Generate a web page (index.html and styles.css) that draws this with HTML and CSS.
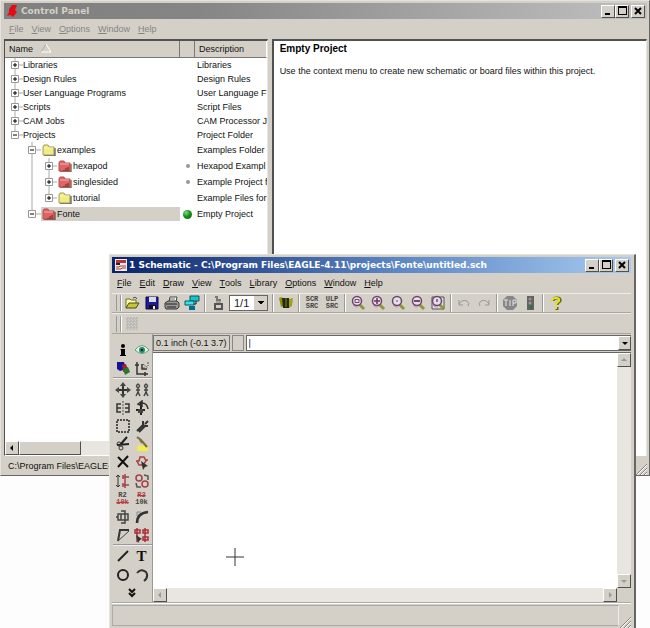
FILE: index.html
```html
<!DOCTYPE html>
<html lang="en">
<head>
<meta charset="utf-8">
<title>Control Panel</title>
<link rel="stylesheet" href="styles.css">
</head>
<body>
<svg class="defs" aria-hidden="true">
  <symbol id="min" viewBox="0 0 12 12"><path d="M3 8h5v2H3z"/></symbol>
  <symbol id="max" viewBox="0 0 12 12"><path d="M2 1h9v9H2zM3 3v6h7V3z" fill-rule="evenodd"/></symbol>
  <symbol id="close" viewBox="0 0 12 12"><path d="M3 3l6 6M9 3L3 9" stroke="#000" stroke-width="2"/></symbol>
  <symbol id="folder" viewBox="0 0 14 12"><path d="M1 3l1-2h4l1 2h5v8H1z" fill="currentColor" stroke="#a09a60"/><path d="M2 4h9" stroke="#fff" opacity=".6"/><path d="M13 4v8H2" fill="none" stroke="#333"/></symbol>
  <symbol id="project" viewBox="0 0 14 12"><path d="M1 3l1-2h4l1 2h5v8H1z" fill="#e06464" stroke="#b45050"/><path d="M2 4h9" stroke="#f8b0b0"/><path d="M13 4v8H2M8 8v3M10 7v4M6 10v1" fill="none" stroke="#622"/></symbol>
  <symbol id="lens" viewBox="0 0 16 16"><path d="M10 10l4 4" stroke="#8f9638" stroke-width="3"/><circle cx="7" cy="6" r="4.5" fill="#e8dce8" stroke="#684868" stroke-width="1.5"/><path d="M3 10l2 2h3" fill="none" stroke="#d48bc0"/></symbol>
  <symbol id="grip" viewBox="0 0 12 12"><path d="M1 12L12 1M5 12l7-7M9 12l3-3" stroke="#87847d"/><path d="M2 12L12 2M6 12l6-6M10 12l2-2" stroke="#fff"/></symbol>
  <symbol id="left" viewBox="0 0 12 12"><path d="M7 3v6L4 6z"/></symbol>
  <symbol id="right" viewBox="0 0 12 12"><path d="M5 3v6l3-3z"/></symbol>
  <symbol id="up" viewBox="0 0 12 12"><path d="M3 7h6L6 4z"/></symbol>
  <symbol id="down" viewBox="0 0 12 12"><path d="M3 5h6L6 8z"/></symbol>
  <symbol id="root-plus" viewBox="0 0 18 14"><path d="M10 0v14M10 7h8" stroke="#aaa"/><path d="M6.500 3.500h7v7h-7z" fill="#fff" stroke="#999"/><path d="M8 7h4M10 5v4" stroke="#000"/></symbol>
  <symbol id="root-minus" viewBox="0 0 18 14"><path d="M10 0v7h8" fill="none" stroke="#aaa"/><path d="M6.500 3.500h7v7h-7z" fill="#fff" stroke="#999"/><path d="M8 7h4" stroke="#000"/></symbol>
</svg>

<main class="desktop">
<section class="window control" aria-label="Control Panel">
  <header class="titlebar inactive">
    <svg class="app" viewBox="0 0 12 12"><path d="M5 0h5L8 5l2 2-4 5-3-2-3 1 2-4V4z" fill="#e80c12"/></svg>
    <h1>Control Panel</h1>
    <button aria-label="Minimize"><svg><use href="#min"/></svg></button>
    <button aria-label="Maximize"><svg><use href="#max"/></svg></button>
    <button class="close" aria-label="Close"><svg><use href="#close"/></svg></button>
  </header>
  <nav class="menu dim">
    <button><u>F</u>ile</button><button><u>V</u>iew</button><button><u>O</u>ptions</button><button><u>W</u>indow</button><button><u>H</u>elp</button>
  </nav>
  <div class="panes">
    <div class="tree">
      <table>
        <colgroup><col class="c-name"><col class="c-mark"><col></colgroup>
        <thead><tr><th>Name <svg class="sort" viewBox="0 0 12 10"><path d="M1 9L6 1" stroke="#aaa"/><path d="M6 1l5 8H1" fill="none" stroke="#fff"/></svg></th><th></th><th>Description</th></tr></thead>
        <tbody>
          <tr><td><div class="node"><svg class="branch"><use href="#root-plus"/></svg>Libraries</div></td><td></td><td>Libraries</td></tr>
          <tr><td><div class="node"><svg class="branch"><use href="#root-plus"/></svg>Design Rules</div></td><td></td><td>Design Rules</td></tr>
          <tr><td><div class="node"><svg class="branch"><use href="#root-plus"/></svg>User Language Programs</div></td><td></td><td>User Language F</td></tr>
          <tr><td><div class="node"><svg class="branch"><use href="#root-plus"/></svg>Scripts</div></td><td></td><td>Script Files</td></tr>
          <tr><td><div class="node"><svg class="branch"><use href="#root-plus"/></svg>CAM Jobs</div></td><td></td><td>CAM Processor J</td></tr>
          <tr><td><div class="node"><svg class="branch"><use href="#root-minus"/></svg>Projects</div></td><td></td><td>Project Folder</td></tr>
          <tr class="tall"><td><div class="node"><svg class="b2" viewBox="0 0 36 16"><path d="M27 0v16M27 8h9" stroke="#aaa"/><path d="M23.500 4.500h7v7h-7z" fill="#fff" stroke="#999"/><path d="M25 8h4" stroke="#000"/></svg><span class="label"><svg class="folder"><use href="#folder"/></svg>examples</span></div></td><td></td><td>Examples Folder</td></tr>
          <tr class="tall"><td><div class="node"><svg class="b3" viewBox="0 0 52 16"><path d="M27 0v16M44 0v16M44 8h8" stroke="#aaa"/><path d="M40.500 4.500h7v7h-7z" fill="#fff" stroke="#999"/><path d="M42 8h4M44 6v4" stroke="#000"/></svg><span class="label"><svg class="folder"><use href="#project"/></svg>hexapod</span></div></td><td><i class="dot"></i></td><td>Hexapod Exampl</td></tr>
          <tr class="tall"><td><div class="node"><svg class="b3" viewBox="0 0 52 16"><path d="M27 0v16M44 0v16M44 8h8" stroke="#aaa"/><path d="M40.500 4.500h7v7h-7z" fill="#fff" stroke="#999"/><path d="M42 8h4M44 6v4" stroke="#000"/></svg><span class="label"><svg class="folder"><use href="#project"/></svg>singlesided</span></div></td><td><i class="dot"></i></td><td>Example Project f</td></tr>
          <tr class="tall"><td><div class="node"><svg class="b3" viewBox="0 0 52 16"><path d="M27 0v16M44 0v8h8" fill="none" stroke="#aaa"/><path d="M40.500 4.500h7v7h-7z" fill="#fff" stroke="#999"/><path d="M42 8h4M44 6v4" stroke="#000"/></svg><span class="label"><svg class="folder"><use href="#folder"/></svg>tutorial</span></div></td><td></td><td>Example Files for</td></tr>
          <tr class="tall"><td><div class="node"><svg class="b2" viewBox="0 0 36 16"><path d="M27 0v8h9" fill="none" stroke="#aaa"/><path d="M23.500 4.500h7v7h-7z" fill="#fff" stroke="#999"/><path d="M25 8h4" stroke="#000"/></svg><span class="label selected"><svg class="folder"><use href="#project"/></svg>Fonte</span></div></td><td><i class="dot active"></i></td><td>Empty Project</td></tr>
        </tbody>
      </table>
      <div class="hscroll"><button aria-label="Scroll left"><svg><use href="#left"/></svg></button><span class="thumb"></span></div>
    </div>
    <article class="details">
      <h2>Empty Project</h2>
      <p>Use the context menu to create new schematic or board files within this project.</p>
    </article>
  </div>
  <footer class="status"><span>C:\Program Files\EAGLE-</span><svg class="grip"><use href="#grip"/></svg></footer>
</section>

<section class="window schematic" aria-label="Schematic">
  <header class="titlebar">
    <svg class="app" viewBox="0 0 12 12"><path d="M0 0h12v12H0z" fill="#eee"/><path d="M1 1h10v3H1z" fill="#b33"/><path d="M1 4h4v2H1z" fill="#222"/><path d="M1 8h3l1-1h6M1 10h5l1-1h4" fill="none" stroke="#a33"/></svg>
    <h1>1 Schematic - C:\Program Files\EAGLE-4.11\projects\Fonte\untitled.sch</h1>
    <button aria-label="Minimize"><svg><use href="#min"/></svg></button>
    <button aria-label="Maximize"><svg><use href="#max"/></svg></button>
    <button class="close" aria-label="Close"><svg><use href="#close"/></svg></button>
  </header>
  <nav class="menu">
    <button><u>F</u>ile</button><button><u>E</u>dit</button><button><u>D</u>raw</button><button><u>V</u>iew</button><button><u>T</u>ools</button><button><u>L</u>ibrary</button><button><u>O</u>ptions</button><button><u>W</u>indow</button><button><u>H</u>elp</button>
  </nav>
  <div class="toolbar">
    <i class="handle"></i>
    <button aria-label="Open"><svg viewBox="0 0 16 16"><path d="M2 13V4h4l1 1h5v3" fill="#ffffb0" stroke="#6b6b20"/><path d="M2 13l3-5h10l-3 5z" fill="#c8c43c" stroke="#4c4a10"/><path d="M9 3q3-2 4 1" fill="none" stroke="#444"/></svg></button>
    <button aria-label="Save"><svg viewBox="0 0 16 16"><path d="M2 2h12v12H2z" fill="#1c1c9c" stroke="#080840"/><path d="M5 2h7v5H5z" fill="#d8dce8"/><path d="M5 10h7v4H5z" fill="#111"/><path d="M9 11h2v3H9z" fill="#eee"/></svg></button>
    <button aria-label="Print"><svg viewBox="0 0 16 16"><path d="M5 7l1-5h7l-1 5" fill="#fff" stroke="#444"/><path d="M1 8l3-2h9l2 2v4l-2 2H2l-1-2z" fill="#999" stroke="#333"/><path d="M2 9h11M3 12h9" stroke="#222"/><path d="M6 4h5" stroke="#666"/></svg></button>
    <button aria-label="CAM processor"><svg viewBox="0 0 16 16"><path d="M6 1h9v5H6z" fill="#18c4cc" stroke="#075860"/><path d="M1 6h9v4H1z" fill="#35e4ec" stroke="#075860"/><path d="M5 11h6v4H5z" fill="#086894"/><path d="M12 6v3h-2" fill="none" stroke="#111"/></svg></button>
    <i class="sep"></i>
    <button aria-label="Board"><svg viewBox="0 0 16 16"><path d="M5 2h2v3h4" fill="none" stroke="#777" stroke-width="2"/><path d="M5 9h7v5H5z" fill="none" stroke="#555" stroke-width="2"/><path d="M6 7h5" stroke="#777"/></svg></button>
    <select class="sheet" aria-label="Sheet"><option>1/1</option></select>
    <i class="sep"></i>
    <button aria-label="Use library"><svg viewBox="0 0 16 16"><path d="M1 3l3-1 2 9-3 1z" fill="#8c8e10"/><path d="M4 3h4v10H5zM8 3h3v10H8z" fill="#222b10"/><path d="M11 4l4-1-1 8-3 2z" fill="#a5a018"/><path d="M8 3v9" stroke="#8a8620"/></svg></button>
    <i class="sep"></i>
    <button aria-label="Run script" class="lettered">SCR<br>SRC</button>
    <button aria-label="Run ULP" class="lettered">ULP<br>SRC</button>
    <i class="sep"></i>
    <button aria-label="Zoom to fit"><svg viewBox="0 0 16 16"><use href="#lens"/><path d="M5 4.500h4v3H5z" fill="none" stroke="#747"/></svg></button>
    <button aria-label="Zoom in"><svg viewBox="0 0 16 16"><use href="#lens"/><path d="M4 6h6M7 3v6" stroke="#712f66" stroke-width="1.500"/></svg></button>
    <button aria-label="Zoom out"><svg viewBox="0 0 16 16"><use href="#lens"/><path d="M6 6h2" stroke="#747"/></svg></button>
    <button aria-label="Redraw"><svg viewBox="0 0 16 16"><use href="#lens"/><path d="M4 6h6" stroke="#747" stroke-width="2"/></svg></button>
    <button aria-label="Zoom select"><svg viewBox="0 0 16 16"><path d="M2 2h12v12H2z" fill="#ddd" stroke="#555"/><use href="#lens"/><path d="M6 4h2v3H6z" fill="#96b"/></svg></button>
    <i class="sep"></i>
    <button aria-label="Undo"><svg viewBox="0 0 16 16"><path d="M3 5v5h4M3 9q3-5 8-3 3 2 1 5" fill="none" stroke="#999"/></svg></button>
    <button aria-label="Redo"><svg viewBox="0 0 16 16"><path d="M13 5v5H9M13 9q-3-5-8-3-3 2-1 5" fill="none" stroke="#999"/></svg></button>
    <i class="sep"></i>
    <button aria-label="Stop"><svg viewBox="0 0 16 16"><path d="M5 1h6l4 4v6l-4 4H5l-4-4V5z" fill="#85858a"/><path d="M4 5v6M2 5h4M8 5v6M11 5v6M11 5h3v3h-3" fill="none" stroke="#e6e6e6"/></svg></button>
    <button aria-label="Go"><svg viewBox="0 0 16 16"><path d="M5 1h7v14H5z" fill="#626462"/><circle cx="8" cy="4" r="1.500" fill="#b08888"/><circle cx="8" cy="8" r="1.500" fill="#999"/><circle cx="9" cy="12" r="2" fill="#356e4c"/></svg></button>
    <i class="sep"></i>
    <button aria-label="Help"><svg viewBox="0 0 16 16"><path d="M5 6q0-3 4-3 4 0 3 3-3 2-3 4M9 12v3" fill="none" stroke="#66661a" stroke-width="3"/><path d="M4 6q0-3 4-3 4 0 3 3-3 2-3 4M8 12v2" fill="none" stroke="#e8e420" stroke-width="2"/></svg></button>
  </div>
  <div class="toolbar params">
    <i class="handle"></i>
    <button aria-label="Grid"><svg viewBox="0 0 16 16"><path d="M2 3h12M2 6h12M2 9h12M2 12h12M4 1v13M7 1v13M10 1v13M13 1v13" stroke="#aaa" stroke-dasharray="2 1"/></svg></button>
  </div>
  <div class="editor">
    <aside class="palette">
      <div class="group g2">
        <button aria-label="Info"><svg viewBox="0 0 16 16"><circle cx="8" cy="4" r="2"/><path d="M6 7h4v6h1v1H5v-1h1V8H5z"/></svg></button>
        <button aria-label="Show"><svg viewBox="0 0 16 16"><path d="M1 8q7-9 14 0-7 7-14 0z" fill="#e8f4e4" stroke="#5ca080"/><circle cx="8" cy="8" r="3" fill="#26886c"/><circle cx="8" cy="8" r="1"/></svg></button>
        <button aria-label="Display"><svg viewBox="0 0 16 16"><path d="M2 2h7l2 7-6 2-3-2z" fill="#141494"/><path d="M7 5l4-1 2 6-5 2z" fill="#a81c2c"/><path d="M8 9l5-2 2 5-5 3z" fill="#247830"/></svg></button>
        <button aria-label="Mark"><svg viewBox="0 0 16 16"><path d="M3 2v12h11M1 5h4M11 12v4M8 4v5h5" fill="none" stroke="#333" stroke-width="1.500"/><path d="M9 4l5 4M14 2v4M9 8h3" stroke="#555" stroke-dasharray="2 1"/></svg></button>
      </div>
      <div class="group g9">
        <button aria-label="Move"><svg viewBox="0 0 16 16"><path d="M8 2v12M2 8h12" stroke="#333" stroke-width="2"/><path d="M8 0l3 4H5zM8 16l3-4H5zM0 8l4-3v6zM16 8l-4-3v6z" fill="#444"/></svg></button>
        <button aria-label="Copy"><svg viewBox="0 0 16 16"><path d="M4 2q3 2 0 4-3-2 0-4zM4 6v4M2 8h4M4 10l-2 4M4 10l2 4M12 2q3 2 0 4-3-2 0-4zM12 6v4M10 8h4M12 10l-2 4M12 10l2 4" fill="none" stroke="#444" stroke-width="1.500"/></svg></button>
        <button aria-label="Mirror"><svg viewBox="0 0 16 16"><path d="M6 4H2v8h4M2 8h4M10 4h4v8h-4M10 8h4" fill="none" stroke="#333" stroke-width="1.500"/><path d="M8 1v14" stroke="#555" stroke-dasharray="2 1"/></svg></button>
        <button aria-label="Rotate"><svg viewBox="0 0 16 16"><path d="M7 15V2M2 10h9" stroke="#222" stroke-width="2"/><path d="M4 4l4-3v5zM8 3q5 0 6 6" fill="none" stroke="#333" stroke-width="1.500"/><path d="M4 9h5v4H4z" fill="#444"/></svg></button>
        <button aria-label="Group"><svg viewBox="0 0 16 16"><path d="M2 2h12v12H2z" fill="none" stroke="#222" stroke-width="1.500" stroke-dasharray="2 1"/></svg></button>
        <button aria-label="Change"><svg viewBox="0 0 16 16"><path d="M3 13l7-7M5 14l6-6M9 3v5h5M11 6l3-3" fill="none" stroke="#333" stroke-width="2"/></svg></button>
        <button aria-label="Cut"><svg viewBox="0 0 16 16"><path d="M12 1L5 9M2 9l12-1" stroke="#222" stroke-width="2"/><circle cx="4" cy="8" r="2" fill="none" stroke="#333"/><circle cx="6" cy="12" r="2" fill="none" stroke="#333"/></svg></button>
        <button aria-label="Paste"><svg viewBox="0 0 16 16"><path d="M4 9l10 2v4H3z" fill="#f4ec48"/><path d="M3 1l4 3 6 7M5 2l3 5" fill="none" stroke="#776f3c" stroke-width="2"/></svg></button>
        <button aria-label="Delete"><svg viewBox="0 0 16 16"><path d="M3 3l10 10M13 2L3 13" stroke="#111" stroke-width="2"/></svg></button>
        <button aria-label="Add"><svg viewBox="0 0 16 16"><path d="M2 7h3l1-4h4l2 4-3 4H5L3 7M12 6h2" fill="none" stroke="#aa3d42" stroke-width="1.500"/><path d="M7 7l7 5-3 1-2 3z" fill="#333"/></svg></button>
        <button aria-label="Pin swap"><svg viewBox="0 0 16 16"><path d="M3 2v12M1 4l2-2 2 2M1 12l2 2 2-2" fill="none" stroke="#333"/><path d="M10 1v14M14 4H8M14 12H8M8 2v4M8 10v4" fill="none" stroke="#a34148" stroke-width="1.500"/></svg></button>
        <button aria-label="Gate swap"><svg viewBox="0 0 16 16"><circle cx="5" cy="5" r="3" fill="none" stroke="#a34148" stroke-width="1.500"/><circle cx="11" cy="11" r="3" fill="none" stroke="#a34148" stroke-width="1.500"/><path d="M10 2l4 1v4M2 10l1 4h4" fill="none" stroke="#555" stroke-width="1.500"/></svg></button>
        <button aria-label="Name" class="lettered"><span>R2<br><s>10k</s></span></button>
        <button aria-label="Value" class="lettered"><span><s>R2</s><br>10k</span></button>
        <button aria-label="Smash"><svg viewBox="0 0 16 16"><path d="M3 5h10v6H3zM6 2h4v3M6 14h4v-3M1 8h2M6 5v6M10 5v6" fill="none" stroke="#444" stroke-width="1.500"/></svg></button>
        <button aria-label="Miter"><svg viewBox="0 0 16 16"><path d="M3 14q0-10 11-11" fill="none" stroke="#333" stroke-width="2.500"/><path d="M3 7V3h4" fill="none" stroke="#888"/></svg></button>
        <button aria-label="Split"><svg viewBox="0 0 16 16"><path d="M3 14L5 3h9" fill="none" stroke="#333" stroke-width="2"/><path d="M3 14L14 4" stroke="#444"/></svg></button>
        <button aria-label="Invoke"><svg viewBox="0 0 16 16"><path d="M1 3h5v3H1zM9 3h5v3H9zM9 10h5v3H9zM3 1v14M11 1v14" fill="none" stroke="#a92e38" stroke-width="1.500"/><path d="M2 8l6 4-2 1-2 3z" fill="#333"/></svg></button>
      </div>
      <div class="group g2">
        <button aria-label="Wire"><svg viewBox="0 0 16 16"><path d="M3 13L13 3" stroke="#222" stroke-width="2"/></svg></button>
        <button aria-label="Text" class="letter-t">T</button>
        <button aria-label="Circle"><svg viewBox="0 0 16 16"><circle cx="8" cy="8" r="5" fill="none" stroke="#222" stroke-width="2"/></svg></button>
        <button aria-label="Arc"><svg viewBox="0 0 16 16"><path d="M3 6q4-5 9-1 3 5-2 9" fill="none" stroke="#333" stroke-width="2"/></svg></button>
      </div>
      <button class="more" aria-label="More tools"><svg viewBox="0 0 16 16"><path d="M5 4l3 3 3-3M5 8l3 3 3-3" fill="none" stroke="#111" stroke-width="2"/></svg></button>
    </aside>
    <div class="work">
      <div class="command">
        <output class="coords">0.1 inch (-0.1 3.7)</output><i class="cell"></i>
        <div class="combo"><input aria-label="Command" value="|"><button aria-label="History"><svg><use href="#down"/></svg></button></div>
      </div>
      <div class="sheet-area">
        <div class="canvas"><svg class="cross" viewBox="0 0 18 18"><path d="M0 9h18M9 0v18" stroke="#333"/></svg></div>
        <div class="vscroll"><button aria-label="Scroll up"><svg><use href="#up"/></svg></button><button aria-label="Scroll down"><svg><use href="#down"/></svg></button></div>
        <div class="hscroll"><button aria-label="Scroll left"><svg><use href="#left"/></svg></button><button aria-label="Scroll right"><svg><use href="#right"/></svg></button></div>
        <div class="corner"></div>
      </div>
    </div>
  </div>
  <footer class="status"><span></span><svg class="grip"><use href="#grip"/></svg></footer>
</section>
</main>
</body>
</html>
```
FILE: styles.css
```css
:root {
  --face: #d4d0c8;
  --dark: #505050;
  --track: #e9e6e2;
}
* { box-sizing: border-box; }
body { margin: 0; background: #fdfdfd; color: #111; font: 9px/14px "Liberation Sans", sans-serif; }
.defs { position: absolute; width: 0; height: 0; }
button { margin: 0; padding: 0; border: 0; background: none; color: inherit; font: inherit; display: flex; align-items: center; justify-content: center; flex: none; }
h1, h2, p { margin: 0; font-size: inherit; }
svg { display: block; flex: none; }

.desktop { position: relative; height: 100vh; overflow: hidden; }
.window { position: absolute; display: flex; flex-direction: column; background: var(--face); border: 1px solid; border-color: #e4e2dc #666 #666 #e4e2dc; }
.control { inset: 0 0 152px 0; padding: 2px 2px 0 3px; }
.schematic { inset: 254px 14px 0 109px; padding: 2px 3px 0 2px; border-bottom: 0; border-right: 2px solid #666; }

.titlebar { display: flex; align-items: center; height: 16px; padding: 0 2px 0 3px; flex: none; background: linear-gradient(90deg, #0a246a, #5c86c4 55%, #a6caf0); color: #fff; }
.titlebar.inactive { background: linear-gradient(90deg, #808080, #858585 30%, #c0c0c0); color: #d4d0c8; }
.titlebar h1 { flex: 1; min-width: 0; overflow: hidden; white-space: nowrap; font: bold 9px/14px "DejaVu Sans", sans-serif; }
.app { width: 12px; height: 12px; margin-right: 2px; }
.titlebar button { width: 14px; height: 13px; }
.titlebar .close { margin-left: 2px; }
.titlebar button, .hscroll button, .vscroll button, .combo button { background: var(--face); border: 1px solid; border-color: #fff var(--dark) var(--dark) #fff; }
.titlebar button svg { width: 12px; height: 12px; }

.menu { display: flex; align-items: center; gap: 8px; height: 20px; padding-left: 5px; flex: none; }
.menu.dim { color: #858585; }

.panes { display: flex; flex: 1; min-height: 0; gap: 4px; }
.tree { flex: 0 0 41%; min-width: 0; display: flex; flex-direction: column; background: #fff; border: 1px solid; border-top: 2px solid var(--dark); border-color: var(--dark) var(--track) #fff var(--dark); overflow: hidden; }
table { border-collapse: separate; border-spacing: 0; table-layout: fixed; width: 100%; }
.c-name { width: 175px; }
.c-mark { width: 15px; }
th { height: 17px; padding: 0 4px; text-align: left; font-weight: normal; background: var(--face); border: solid; border-width: 0 1px 1px 0; border-color: #777; }
th:last-child { border-right-color: #fff; }
.sort { display: inline-block; width: 12px; height: 10px; margin-left: 4px; vertical-align: -1px; }
td { height: 14px; padding: 0; line-height: 14px; white-space: nowrap; overflow: hidden; }
td:last-child { padding-left: 2px; }
.tall td { height: 16px; line-height: 16px; }
.node { display: flex; align-items: center; }
.branch { width: 18px; height: 14px; }
.b2 { width: 36px; height: 16px; }
.b3 { width: 52px; height: 16px; }
.folder { width: 14px; height: 12px; margin: 0 1px; color: #f0ec80; }
.label { display: flex; align-items: center; flex: 1; height: 14px; }
.selected { background: var(--face); }
.dot { display: block; width: 4px; height: 4px; margin: 0 auto; border-radius: 50%; background: #999; }
.dot.active { width: 9px; height: 9px; background: radial-gradient(circle at 35% 30%, #7fdd7f, #149018 45%, #0b6510); }
.hscroll { display: flex; height: 14px; background: var(--track); }
.tree .hscroll { margin-top: auto; }
.hscroll button, .vscroll button { width: 14px; height: 14px; }
.hscroll svg, .vscroll svg { width: 12px; height: 12px; }
.thumb { width: 62px; background: var(--face); border: 1px solid; border-color: #fff var(--dark) var(--dark) #fff; }
.details { flex: 1; min-width: 0; padding: 1px 6px; background: #fff; border: solid var(--dark); border-width: 2px 1px 0 2px; border-right-color: var(--track); }
.details h2 { font: bold 10px/14px "Liberation Sans", sans-serif; color: #000; }
.details p { margin-top: 8px; }
.status { display: flex; align-items: center; height: 19px; flex: none; }
.status span { flex: 1; padding-left: 4px; }
.grip { width: 12px; height: 12px; align-self: flex-end; }

.toolbar { display: flex; align-items: center; height: 20px; padding-left: 4px; flex: none; border-top: 1px solid #eeece8; border-bottom: 1px solid #aaa69e; }
.toolbar button { width: 20px; height: 18px; }
.toolbar button svg { width: 16px; height: 16px; }
.handle { width: 5px; height: 16px; margin-right: 1px; border: solid #999; border-width: 0 1px; flex: none; box-shadow: 1px 0 #fff; }
.sep { width: 2px; height: 18px; margin: 0 2px; border-left: 1px solid #999; border-right: 1px solid #fff; flex: none; }
.sheet { appearance: none; width: 39px; height: 16px; margin: 0 2px 0 1px; padding: 0 0 0 4px; border: 1px solid #666; border-radius: 0; color: #222; font: 11px/14px "Liberation Sans", sans-serif;
  background: linear-gradient(45deg, #0000 50%, #000 50%) right 6px top 5px / 4px 4px no-repeat, linear-gradient(-45deg, #0000 50%, #000 50%) right 2px top 5px / 4px 4px no-repeat, linear-gradient(var(--face), var(--face)) right / 13px 100% no-repeat, #fff; }
.toolbar .lettered, .palette .lettered { color: #444; font: bold 7px/7px "Liberation Mono", monospace; text-align: center; }
.params { height: 21px; }

.editor { display: flex; flex: 1; min-height: 0; }
.palette { display: flex; flex-direction: column; flex: 0 0 41px; min-height: 0; padding-top: 7px; border-right: 1px solid #999; }
.group { display: grid; grid-template-columns: 19px 19px; grid-auto-rows: 1fr; margin-left: 1px; min-height: 0; }
.group + .group { border-top: 1px solid #999; box-shadow: inset 0 1px #eee; padding-top: 2px; }
.g2 { flex: 2; }
.g9 { flex: 9; }
.more { flex: 1; min-height: 0; }
.palette button { min-height: 0; overflow: hidden; }
.palette svg { width: 16px; height: 16px; }
.palette s { color: #b03c42; }
.palette .letter-t { font: bold 15px/16px "Liberation Serif", serif; }
.work { display: flex; flex-direction: column; flex: 1; min-width: 0; }
.command { display: flex; height: 18px; flex: none; padding: 1px 0; }
.coords { padding: 0 2px; border: 1px solid #777; line-height: 14px; white-space: nowrap; }
.cell { width: 12px; margin: 0 2px; border: 1px solid #888; }
.combo { display: flex; flex: 1; min-width: 0; background: #fff; border: 1px solid #666; border-right: 0; }
.combo input { flex: 1; min-width: 0; padding: 0 2px; border: 0; background: none; color: inherit; font: inherit; outline: 0; }
.combo button { width: 13px; }
.combo svg { width: 12px; height: 12px; }
.sheet-area { display: grid; grid-template: 1fr 14px / 1fr 14px; flex: 1; min-height: 0; border-top: 1px solid #666; }
.canvas { position: relative; background: #fff; }
.cross { position: absolute; left: 73px; bottom: 22px; width: 18px; height: 18px; }
.vscroll { display: flex; flex-direction: column; justify-content: space-between; background: var(--track); }
.sheet-area .hscroll { justify-content: space-between; }
.vscroll button, .sheet-area .hscroll button { fill: #999; }
.corner { background: var(--face); }
.schematic .status { height: 26px; border-top: 1px solid #aaa; box-shadow: inset 0 1px #fff; }
.schematic .status span { align-self: stretch; margin: 2px 0; border: 1px solid #aaa; border-right-color: #eee; }
```
